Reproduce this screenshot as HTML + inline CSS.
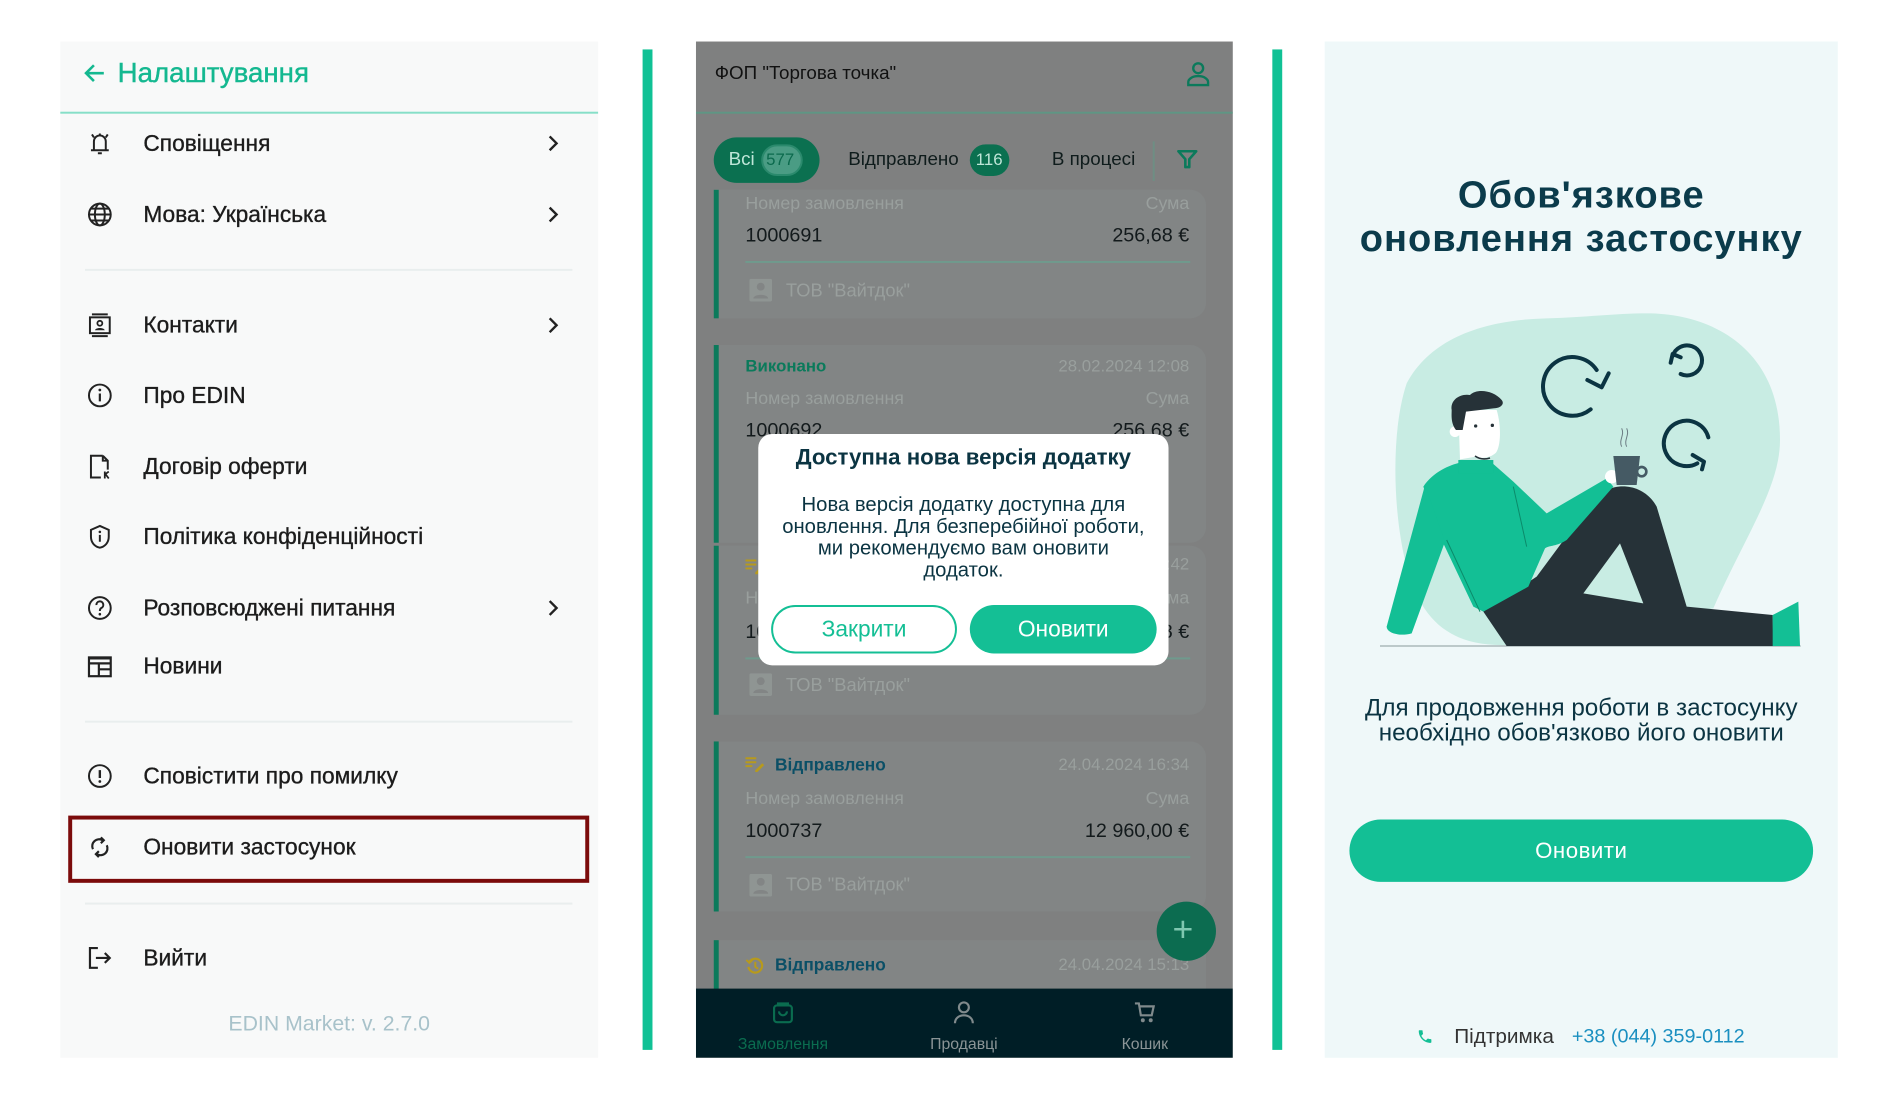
<!DOCTYPE html>
<html><head><meta charset="utf-8">
<style>
*{margin:0;padding:0;box-sizing:border-box}
body{width:1900px;height:1100px;background:#fff;position:relative;overflow:hidden;font-family:"Liberation Sans","DejaVu Sans",sans-serif}
#w{position:absolute;left:0;top:0;width:1922px;height:1113px;transform:scale(0.9886);transform-origin:0 0}
.a{position:absolute}
.lp{left:61px;top:42px;width:544px;height:1028px;background:#f8f9f9}
.it{position:absolute;left:145px;font-size:23px;color:#1c1c1c;transform:translateY(-50%);white-space:nowrap;-webkit-text-stroke:.35px #1c1c1c}
.ic{position:absolute;left:88px;width:26px;height:26px;transform:translateY(-50%)}
.chev{position:absolute;left:553px;transform:translateY(-50%)}
.dv{position:absolute;left:86px;width:493px;height:2px;background:#e9eeee}
.mp{left:704px;top:42px;width:543px;height:1028px;background:#7f8080;overflow:hidden}
.t{position:absolute;white-space:nowrap;transform:translateY(-50%)}
.g{color:#999f9d;font-size:18px}
.n{color:#131a1c;font-size:20px}
.bar{position:absolute;left:18px;width:5px;background:#0b7a5b}
.card{position:absolute;left:18px;width:498px;background:#828585;border-radius:0 16px 16px 0}
.ln{position:absolute;left:50px;width:450px;height:2px;background:#6f9a8d}
.rp{left:1340px;top:42px;width:519px;height:1028px;background:#eff8f9}
</style></head><body>
<div id="w">
<!-- LEFT PANEL -->
<div class="a lp"></div>
<svg class="a" style="left:84px;top:62px" width="24" height="24" viewBox="0 0 24 24"><path d="M21 12H4M11 4l-8 8 8 8" fill="none" stroke="#14b890" stroke-width="2.6"/></svg>
<div class="a" style="left:119px;top:74px;transform:translateY(-50%);font-size:28px;color:#14b890;-webkit-text-stroke:.4px #14b890">Налаштування</div>
<div class="a" style="left:61px;top:113px;width:544px;height:2px;background:#86dfc8"></div>

<svg class="ic" style="top:145px" viewBox="0 0 26 26"><path d="M7 19V11a6 6 0 0 1 12 0v8M4 20h18M11 23h4M13 3v2M5 4l2 3M21 4l-2 3" fill="none" stroke="#222" stroke-width="2"/></svg>
<div class="it" style="top:145px">Сповіщення</div>
<svg class="chev" style="top:145px" width="12" height="18" viewBox="0 0 12 18"><path d="M3 2l7 7-7 7" fill="none" stroke="#222" stroke-width="2.4"/></svg>

<svg class="ic" style="top:217px" viewBox="0 0 26 26"><circle cx="13" cy="13" r="11" fill="none" stroke="#222" stroke-width="2"/><ellipse cx="13" cy="13" rx="5" ry="11" fill="none" stroke="#222" stroke-width="2"/><path d="M2 13h22M4 7h18M4 19h18" stroke="#222" stroke-width="2"/></svg>
<div class="it" style="top:217px">Мова: Українська</div>
<svg class="chev" style="top:217px" width="12" height="18" viewBox="0 0 12 18"><path d="M3 2l7 7-7 7" fill="none" stroke="#222" stroke-width="2.4"/></svg>

<div class="dv" style="top:272px"></div>

<svg class="ic" style="top:329px" viewBox="0 0 26 26"><path d="M5 2h16M5 24h16" stroke="#222" stroke-width="2"/><rect x="3" y="5" width="20" height="16" fill="none" stroke="#222" stroke-width="2"/><circle cx="13" cy="11" r="2.5" fill="none" stroke="#222" stroke-width="1.8"/><path d="M8 18c1-3 9-3 10 0z" fill="#222"/></svg>
<div class="it" style="top:329px">Контакти</div>
<svg class="chev" style="top:329px" width="12" height="18" viewBox="0 0 12 18"><path d="M3 2l7 7-7 7" fill="none" stroke="#222" stroke-width="2.4"/></svg>

<svg class="ic" style="top:400px" viewBox="0 0 26 26"><circle cx="13" cy="13" r="11" fill="none" stroke="#222" stroke-width="2"/><path d="M13 11v8" stroke="#222" stroke-width="2.2"/><circle cx="13" cy="7.5" r="1.4" fill="#222"/></svg>
<div class="it" style="top:400px">Про EDIN</div>

<svg class="ic" style="top:472px" viewBox="0 0 26 26"><path d="M16 2H4v22h10M16 2l5 5v9M16 2v5h5" fill="none" stroke="#222" stroke-width="2"/><path d="M18 18v7M18 21l4-3M19 21l3 4" stroke="#222" stroke-width="1.8" fill="none"/></svg>
<div class="it" style="top:472px">Договір оферти</div>

<svg class="ic" style="top:543px" viewBox="0 0 26 26"><path d="M13 2l9 4v7c0 6-4 10-9 11C8 23 4 19 4 13V6z" fill="none" stroke="#222" stroke-width="2"/><path d="M13 11v7" stroke="#222" stroke-width="2"/><circle cx="13" cy="8" r="1.3" fill="#222"/></svg>
<div class="it" style="top:543px">Політика конфіденційності</div>

<svg class="ic" style="top:615px" viewBox="0 0 26 26"><circle cx="13" cy="13" r="11" fill="none" stroke="#222" stroke-width="2"/><path d="M9.5 10a3.5 3.5 0 1 1 5 3c-1.3.7-1.5 1.5-1.5 3" fill="none" stroke="#222" stroke-width="2"/><circle cx="13" cy="19.3" r="1.3" fill="#222"/></svg>
<div class="it" style="top:615px">Розповсюджені питання</div>
<svg class="chev" style="top:615px" width="12" height="18" viewBox="0 0 12 18"><path d="M3 2l7 7-7 7" fill="none" stroke="#222" stroke-width="2.4"/></svg>

<svg class="ic" style="top:674px" viewBox="0 0 26 26"><rect x="2" y="4" width="22" height="19" fill="none" stroke="#222" stroke-width="2.2"/><path d="M2 5h22M2 10h22M12 10v13M12 16h12" stroke="#222" stroke-width="2.2"/></svg>
<div class="it" style="top:674px">Новини</div>

<div class="dv" style="top:729px"></div>

<svg class="ic" style="top:785px" viewBox="0 0 26 26"><circle cx="13" cy="13" r="11" fill="none" stroke="#222" stroke-width="2"/><path d="M13 7v8" stroke="#222" stroke-width="2.4"/><circle cx="13" cy="18.5" r="1.4" fill="#222"/></svg>
<div class="it" style="top:785px">Сповістити про помилку</div>

<div class="a" style="left:69px;top:825px;width:527px;height:68px;border:4px solid #7b0b0b"></div>
<svg class="ic" style="top:857px" viewBox="0 0 26 26"><path d="M6 15a7 7 0 0 1 10-9M20 11a7 7 0 0 1-10 9" fill="none" stroke="#222" stroke-width="2.2"/><path d="M14 3l3 3-3 3M12 23l-3-3 3-3" fill="none" stroke="#222" stroke-width="2.2"/></svg>
<div class="it" style="top:857px">Оновити застосунок</div>

<div class="dv" style="top:913px"></div>

<svg class="ic" style="top:969px" viewBox="0 0 26 26"><path d="M11 3H3v20h8" fill="none" stroke="#222" stroke-width="2.2"/><path d="M9 13h14M18 8l5 5-5 5" fill="none" stroke="#222" stroke-width="2.2"/></svg>
<div class="it" style="top:969px">Вийти</div>

<div class="a" style="left:61px;width:544px;top:1036px;transform:translateY(-50%);text-align:center;font-size:21.5px;color:#a8c2ca">EDIN Market: v. 2.7.0</div>

<!-- GREEN BARS -->
<div class="a" style="left:650px;top:50px;width:10px;height:1012px;background:#10c195"></div>
<div class="a" style="left:1287px;top:50px;width:10px;height:1012px;background:#10c195"></div>

<!-- MIDDLE PANEL -->
<div class="a mp">
  <div class="t" style="left:19px;top:33px;font-size:19px;color:#111">ФОП "Торгова точка"</div>
  <svg class="a" style="left:496px;top:20px" width="24" height="26" viewBox="0 0 24 26"><circle cx="12" cy="7" r="5" fill="none" stroke="#0b7a5b" stroke-width="2.4"/><path d="M2 24v-3c0-3 4-6 10-6s10 3 10 6v3z" fill="none" stroke="#0b7a5b" stroke-width="2.4"/></svg>
  <div class="a" style="left:0;top:71px;width:543px;height:2px;background:#5f9684"></div>

  <div class="a" style="left:18px;top:97px;width:107px;height:46px;border-radius:23px;background:#0b7050"></div>
  <div class="t" style="left:33px;top:120px;font-size:19px;color:#bfe6d8">Всі</div>
  <div class="a" style="left:66px;top:104px;width:42px;height:32px;border-radius:16px;background:#4a9c84;border:2px solid #2b8a6d"></div>
  <div class="t" style="left:71px;top:120px;font-size:17px;color:#0b6a4d">577</div>
  <div class="t" style="left:154px;top:120px;font-size:19px;color:#0f1c1c">Відправлено</div>
  <div class="a" style="left:277px;top:104px;width:40px;height:32px;border-radius:16px;background:#0b7050"></div>
  <div class="t" style="left:283px;top:120px;font-size:17px;color:#bfe6d8">116</div>
  <div class="t" style="left:360px;top:120px;font-size:19px;color:#0f1c1c">В процесі</div>
  <div class="a" style="left:462px;top:101px;width:2px;height:40px;background:#6e8e84"></div>
  <svg class="a" style="left:486px;top:108px" width="22" height="22" viewBox="0 0 22 22"><path d="M2 3h18l-7 8v8h-4v-8z" fill="none" stroke="#0b7a5b" stroke-width="2.6" stroke-linejoin="round"/></svg>

  <!-- card 1 -->
  <div class="card" style="top:150px;height:130px"></div>
  <div class="bar" style="top:150px;height:130px"></div>
  <div class="t g" style="left:50px;top:164px">Номер замовлення</div>
  <div class="t g" style="right:44px;top:164px">Сума</div>
  <div class="t n" style="left:50px;top:197px">1000691</div>
  <div class="t n" style="right:44px;top:197px">256,68 €</div>
  <div class="ln" style="top:222px"></div>
  <svg class="a" style="left:54px;top:240px" width="23" height="23" viewBox="0 0 23 23"><rect width="23" height="23" rx="2" fill="#8f9593"/><circle cx="11.5" cy="8" r="4" fill="#828585"/><path d="M4 20c0-5 15-5 15 0z" fill="#828585"/></svg>
  <div class="t g" style="left:91px;top:252px;font-size:18.5px">ТОВ "Вайтдок"</div>

  <!-- card 2 -->
  <div class="card" style="top:307px;height:200px"></div>
  <div class="bar" style="top:307px;height:200px"></div>
  <div class="t" style="left:50px;top:329px;font-size:17px;color:#0b7a5b;font-weight:bold">Виконано</div>
  <div class="t g" style="right:44px;top:329px;font-size:17px">28.02.2024 12:08</div>
  <div class="t g" style="left:50px;top:361px">Номер замовлення</div>
  <div class="t g" style="right:44px;top:361px">Сума</div>
  <div class="t n" style="left:50px;top:394px">1000692</div>
  <div class="t n" style="right:44px;top:394px">256,68 €</div>

  <!-- card 3 -->
  <div class="card" style="top:510px;height:171px"></div>
  <div class="bar" style="top:510px;height:171px"></div>
  <svg class="a" style="left:50px;top:523px" width="20" height="16" viewBox="0 0 20 16"><path d="M0 2h11M0 6h11M0 10h7" stroke="#b79a1c" stroke-width="2"/><path d="M10 14l7-7 2 2-7 7h-2z" fill="#b79a1c"/></svg>
  <div class="t g" style="right:44px;top:529px;font-size:17px">24.04.2024 18:42</div>
  <div class="t g" style="left:50px;top:563px">Номер замовлення</div>
  <div class="t g" style="right:44px;top:563px">Сума</div>
  <div class="t n" style="left:50px;top:598px">1000700</div>
  <div class="t n" style="right:44px;top:598px">256,68 €</div>
  <div class="ln" style="top:623px"></div>
  <svg class="a" style="left:54px;top:639px" width="23" height="23" viewBox="0 0 23 23"><rect width="23" height="23" rx="2" fill="#8f9593"/><circle cx="11.5" cy="8" r="4" fill="#828585"/><path d="M4 20c0-5 15-5 15 0z" fill="#828585"/></svg>
  <div class="t g" style="left:91px;top:651px;font-size:18.5px">ТОВ "Вайтдок"</div>

  <!-- card 4 -->
  <div class="card" style="top:708px;height:172px"></div>
  <div class="bar" style="top:708px;height:172px"></div>
  <svg class="a" style="left:50px;top:723px" width="20" height="16" viewBox="0 0 20 16"><path d="M0 2h11M0 6h11M0 10h7" stroke="#b79a1c" stroke-width="2"/><path d="M10 14l7-7 2 2-7 7h-2z" fill="#b79a1c"/></svg>
  <div class="t" style="left:80px;top:732px;font-size:17.5px;color:#0b4f66;font-weight:bold">Відправлено</div>
  <div class="t g" style="right:44px;top:732px;font-size:17px">24.04.2024 16:34</div>
  <div class="t g" style="left:50px;top:766px">Номер замовлення</div>
  <div class="t g" style="right:44px;top:766px">Сума</div>
  <div class="t n" style="left:50px;top:799px">1000737</div>
  <div class="t n" style="right:44px;top:799px">12 960,00 €</div>
  <div class="ln" style="top:824px"></div>
  <svg class="a" style="left:54px;top:842px" width="23" height="23" viewBox="0 0 23 23"><rect width="23" height="23" rx="2" fill="#8f9593"/><circle cx="11.5" cy="8" r="4" fill="#828585"/><path d="M4 20c0-5 15-5 15 0z" fill="#828585"/></svg>
  <div class="t g" style="left:91px;top:853px;font-size:18.5px">ТОВ "Вайтдок"</div>

  <!-- card 5 -->
  <div class="card" style="top:909px;height:80px"></div>
  <div class="bar" style="top:909px;height:80px"></div>
  <svg class="a" style="left:50px;top:925px" width="20" height="20" viewBox="0 0 20 20"><path d="M4 6a7 7 0 1 1-1 5" fill="none" stroke="#b79a1c" stroke-width="2.2"/><path d="M1 4l3 3 3-3" fill="none" stroke="#b79a1c" stroke-width="2"/><path d="M10 6v5l3 2" fill="none" stroke="#b79a1c" stroke-width="2"/></svg>
  <div class="t" style="left:80px;top:934px;font-size:17.5px;color:#0b4f66;font-weight:bold">Відправлено</div>
  <div class="t g" style="right:44px;top:934px;font-size:17px">24.04.2024 15:13</div>

  <div class="a" style="left:466px;top:870px;width:60px;height:60px;border-radius:50%;background:#0c6c50"></div>
  <div class="t" style="left:482px;top:898px;font-size:36px;color:#7fc7b0;line-height:1">+</div>

  <!-- nav -->
  <div class="a" style="left:0;top:958px;width:543px;height:70px;background:#001e26"></div>
  <svg class="a" style="left:77px;top:970px" width="22" height="24" viewBox="0 0 22 24"><rect x="2" y="5" width="18" height="17" rx="3" fill="none" stroke="#0a6c4f" stroke-width="2.2"/><path d="M6 5V3h10v2M7 11a4 4 0 0 0 8 0" fill="none" stroke="#0a6c4f" stroke-width="2.2"/></svg>
  <div class="t" style="left:88px;top:1015px;transform:translate(-50%,-50%);font-size:16px;color:#0a6c4f">Замовлення</div>
  <svg class="a" style="left:260px;top:970px" width="22" height="24" viewBox="0 0 22 24"><circle cx="11" cy="7" r="5" fill="none" stroke="#808a8c" stroke-width="2.2"/><path d="M2 23c0-5 4-8 9-8s9 3 9 8" fill="none" stroke="#808a8c" stroke-width="2.2"/></svg>
  <div class="t" style="left:271px;top:1015px;transform:translate(-50%,-50%);font-size:16px;color:#8a9496">Продавці</div>
  <svg class="a" style="left:443px;top:970px" width="22" height="24" viewBox="0 0 22 24"><path d="M1 3h4l2 12h11l2-9H6" fill="none" stroke="#808a8c" stroke-width="2.2"/><circle cx="9" cy="20" r="2" fill="#808a8c"/><circle cx="17" cy="20" r="2" fill="#808a8c"/></svg>
  <div class="t" style="left:454px;top:1015px;transform:translate(-50%,-50%);font-size:16px;color:#8a9496">Кошик</div>

  <!-- dialog -->
  <div class="a" style="left:63px;top:397px;width:415px;height:234px;background:#fff;border-radius:14px"></div>
  <div class="t" style="left:63px;width:415px;top:421px;text-align:center;font-size:22.5px;font-weight:bold;color:#0b3442">Доступна нова версія додатку</div>
  <div class="a" style="left:63px;width:415px;top:458px;text-align:center;font-size:20.5px;line-height:22px;color:#0b3442">Нова версія додатку доступна для<br>оновлення. Для безперебійної роботи,<br>ми рекомендуємо вам оновити<br>додаток.</div>
  <div class="a" style="left:76px;top:570px;width:188px;height:49px;border:2px solid #14bf95;border-radius:25px;text-align:center;line-height:45px;font-size:23px;color:#14bf95">Закрити</div>
  <div class="a" style="left:277px;top:570px;width:189px;height:49px;background:#14bf95;border-radius:25px;text-align:center;line-height:49px;font-size:23px;color:#fff">Оновити</div>
</div>

<!-- RIGHT PANEL -->
<div class="a rp"></div>
<div class="a" style="left:1320px;width:559px;top:176px;text-align:center;font-size:38.5px;line-height:44px;font-weight:bold;color:#0b3b4b;letter-spacing:1px">Обов'язкове<br>оновлення застосунку</div>

<div class="a" style="left:1320px;width:559px;top:704px;text-align:center;font-size:24.5px;line-height:25px;color:#0b3442">Для продовження роботи в застосунку<br>необхідно обов'язково його оновити</div>
<div class="a" style="left:1365px;top:829px;width:469px;height:63px;border-radius:32px;background:#13bf95;text-align:center;line-height:63px;font-size:22.5px;color:#fff;letter-spacing:.5px">Оновити</div>
<svg class="a" style="left:1433px;top:1040px" width="17" height="17" viewBox="0 0 24 24"><path d="M6.6 10.8a15 15 0 0 0 6.6 6.6l2.2-2.2c.3-.3.7-.4 1-.2 1.1.4 2.3.6 3.6.6.6 0 1 .4 1 1V20c0 .6-.4 1-1 1C10.6 21 3 13.4 3 4c0-.6.4-1 1-1h3.5c.6 0 1 .4 1 1 0 1.3.2 2.5.6 3.6.1.3 0 .7-.2 1z" fill="#13bf95"/></svg>
<div class="t" style="left:1471px;top:1049px;font-size:21px;color:#333">Підтримка</div>
<div class="t" style="left:1590px;top:1049px;font-size:20px;color:#1a8fc0">+38 (044) 359-0112</div>
</div>

<!-- ILLUSTRATION (true coords) -->
<svg class="a" style="left:1380px;top:300px" width="460" height="370" viewBox="0 0 1380 1110">
  <path d="M80 250C150 120 300 60 500 55C620 52 700 40 800 40C1000 40 1200 150 1200 420C1200 560 1100 700 1000 925L380 1035C200 1040 120 950 80 800C40 650 30 400 80 250Z" fill="#c8ece3"/>
  <line x1="0" y1="1038" x2="1262" y2="1038" stroke="#8a9a9a" stroke-width="3"/>
  <g fill="none" stroke="#0b3442" stroke-width="12" stroke-linecap="round" stroke-linejoin="round">
    <path d="M650 210A88 88 0 1 0 632 328"/>
    <path d="M622 240L665 262L686 220"/>
    <path d="M878 168A45 45 0 1 1 902 222"/>
    <path d="M872 188L878 162L902 172"/>
    <path d="M985 412A68 68 0 1 0 952 490"/>
    <path d="M938 465L972 485L966 508"/>
  </g>
  <path d="M310 935L470 830L640 600C690 540 790 545 830 620L920 920L1178 945L1180 1038L380 1038Z" fill="#263238"/>
  <path d="M720 730L610 880L790 910Z" fill="#c8ece3"/>
  <path d="M1178 945L1255 905L1260 1038L1178 1038Z" fill="#13bf95"/>
  <path d="M130 560C160 515 210 495 240 488L340 492L400 545L500 640L680 535L700 560L560 720C530 740 510 735 495 745L445 860L310 935L280 920L190 730Z" fill="#13bf95"/>
  <path d="M135 555L20 980C20 1000 60 1010 95 1000L195 725Z" fill="#13bf95"/>
  <path d="M235 480h105v40H235z" fill="#13bf95"/>
  <path d="M400 560L440 740M200 720L300 935" stroke="#0b8a6a" stroke-width="3" fill="none"/>
  <path d="M235 330L350 330C365 380 362 440 348 458C335 472 305 478 288 470L240 478Z" fill="#fff"/>
  <circle cx="225" cy="395" r="16" fill="#fff"/>
  <path d="M215 330C210 300 240 280 270 285C290 265 340 270 365 300C375 312 362 325 340 325L300 330L258 335L248 390L228 390C212 370 215 345 215 330Z" fill="#263238"/>
  <circle cx="287" cy="378" r="5" fill="#263238"/><circle cx="337" cy="376" r="5" fill="#263238"/>
  <path d="M285 468Q305 482 330 474" stroke="#263238" stroke-width="5" fill="none"/>
  <circle cx="695" cy="530" r="20" fill="#fff"/>
  <path d="M700 468L780 468L770 555L710 555Z" fill="#455a64"/>
  <circle cx="785" cy="515" r="14" fill="none" stroke="#455a64" stroke-width="8"/>
  <path d="M725 440c-10-20 10-35 0-55M740 440c-10-20 10-35 0-55" stroke="#6b7b82" stroke-width="3" fill="none"/>
</svg>
</body></html>
